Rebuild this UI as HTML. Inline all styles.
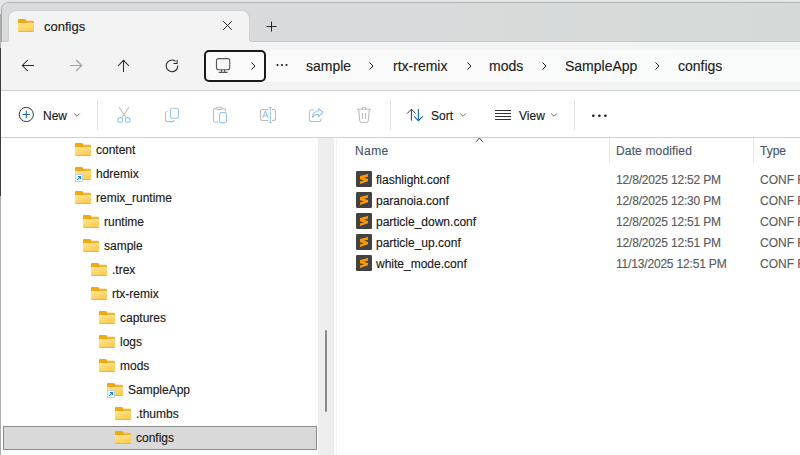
<!DOCTYPE html>
<html><head><meta charset="utf-8">
<style>
*{margin:0;padding:0;box-sizing:border-box}
html,body{width:800px;height:455px;overflow:hidden;background:#e3e4e6;font-family:"Liberation Sans",sans-serif;color:#1b1b1b}
.a{position:absolute}
svg{display:block}
.t{position:absolute;white-space:nowrap;line-height:1;-webkit-text-stroke:0.15px currentColor}
</style></head><body>
<svg width="0" height="0" style="position:absolute"><defs>
<linearGradient id="fg" x1="0" y1="0" x2="0.5" y2="1"><stop offset="0" stop-color="#fee496"/><stop offset="1" stop-color="#fbcf55"/></linearGradient>
<symbol id="fold" viewBox="0 0 16 13">
<path d="M0 1.2Q0 0 1.2 0H6.3Q6.9 0 7.3 .5L8.2 1.8H14.8Q16 1.8 16 3V11.8Q16 13 14.8 13H1.2Q0 13 0 11.8Z" fill="#f2b62c"/>
<path d="M0 1.2Q0 0 1.2 0H6.3Q6.9 0 7.3 .5L8.8 2.5V4H0Z" fill="#eeaa12"/>
<path d="M0 4.4Q0 3.9 .5 3.9H15.5Q16 3.9 16 4.4V11.3Q16 12 15.3 12H.7Q0 12 0 11.3Z" fill="url(#fg)"/>
</symbol>
<symbol id="subl" viewBox="0 0 16 16">
<rect x="0" y="0" width="16" height="16" rx="1.3" fill="#424242"/>
<path d="M4 5L12 2.9V5.8L7.9 6.85L12 7.9V10.3L4 13V10.5L8 9.35L4 8.3Z" fill="#ff9800"/>
</symbol>
<symbol id="short" viewBox="0 0 8 8">
<rect x=".5" y=".5" width="7" height="7" fill="#fff" stroke="#c5d0dc"/>
<path d="M2.2 5.8L5.3 2.7M3 2.5H5.5V5" stroke="#1c82dd" stroke-width="1.2" fill="none"/>
</symbol>
</defs></svg>

<!-- left outside column -->
<div class="a" style="left:0;top:0;width:1px;height:455px;background:#ababab"></div><div class="a" style="left:0;top:0;width:1px;height:14px;background:#e4e5e7"></div>
<div class="a" style="left:0;top:48px;width:1px;height:148px;background:#3c3c3c"></div>

<!-- window -->
<div class="a" style="left:1px;top:2px;width:820px;height:460px;background:#fff;border-top:1px solid #b4b5b7;border-left:1px solid #a8a9ab;border-top-left-radius:8px;overflow:hidden">
</div>
<!-- title bar -->
<div class="a" style="left:2px;top:3px;width:798px;height:39px;background:#d9dadb;border-top-left-radius:7px;overflow:hidden">
  <div class="a" style="left:0;top:33px;width:798px;height:6px;background:#f3f3f3"></div>
  <div class="a" style="left:-1px;top:0;width:8px;height:39px;background:#d9dadb;border-bottom-right-radius:3px;border-right:1px solid #cbcccd;border-bottom:1px solid #cbcccd"></div>
  <div class="a" style="left:247px;top:-1px;width:551px;height:40px;background:linear-gradient(90deg,#d9dadb 0%,#d9dadb 35%,#d5dad8 100%);border-bottom-left-radius:3px;border-left:1px solid #c9cacb;border-bottom:1px solid #c9cacb"></div>
  <div class="a" style="left:0;top:0;width:798px;height:12px;background:linear-gradient(90deg,#d9dadb 0%,#d9dadb 55%,#d5dad8 100%)"></div>
  <div class="a" style="left:6px;top:7px;width:242px;height:28px;background:#f3f3f3;border:1px solid #d0d1d2;border-bottom:0;border-radius:8px 8px 0 0"></div>
</div>
<!-- tab content -->
<svg class="a" style="left:18px;top:19px" width="16" height="13"><use href="#fold"/></svg>
<div class="t" style="left:44px;top:20px;font-size:13px;color:#1a1a1a">configs</div>
<svg class="a" style="left:222px;top:20px" width="11" height="11" viewBox="0 0 11 11"><path d="M1.2 1.2L9.8 9.8M9.8 1.2L1.2 9.8" stroke="#262626" stroke-width="1"/></svg>
<svg class="a" style="left:266px;top:21px" width="12" height="12" viewBox="0 0 12 12"><path d="M5.5 .6V10.6M.5 5.5H10.5" stroke="#262626" stroke-width="1"/></svg>

<!-- nav bar -->
<div class="a" style="left:1px;top:42px;width:799px;height:49px;background:linear-gradient(90deg,#f3f3f3 50%,#f1f4f2);border-bottom:1px solid #cdd0d0"></div>
<svg class="a" style="left:21px;top:59px" width="14" height="13" viewBox="0 0 14 13"><path d="M13 6.5H1.5M6.8 1L1.3 6.5L6.8 12" stroke="#2b2b2b" stroke-width="1.05" fill="none"/></svg>
<svg class="a" style="left:69px;top:59px" width="14" height="13" viewBox="0 0 14 13"><path d="M1 6.5H12.5M7.2 1L12.7 6.5L7.2 12" stroke="#a3a3a3" stroke-width="1.15" fill="none"/></svg>
<svg class="a" style="left:117px;top:59px" width="13" height="14" viewBox="0 0 13 14"><path d="M6.5 13V1.5M1 7L6.5 1.3L12 7" stroke="#2b2b2b" stroke-width="1.05" fill="none"/></svg>
<svg class="a" style="left:165px;top:59px" width="14" height="14" viewBox="0 0 14 14"><path d="M12.8 6.6A5.8 5.8 0 1 1 10.6 2.3" stroke="#2b2b2b" stroke-width="1.05" fill="none"/><path d="M12.1 .9V4.5H8.4" stroke="#2b2b2b" stroke-width="1.05" fill="none"/></svg>

<!-- address bar -->
<div class="a" style="left:204px;top:50px;width:596px;height:32px;background:linear-gradient(90deg,#fafafa 50%,#f9fbfa);border-radius:4px 0 0 4px"></div>
<div class="a" style="left:204px;top:50px;width:62px;height:32px;border:2px solid #1a1a1a;border-radius:5px"></div>
<svg class="a" style="left:215px;top:57px" width="16" height="17" viewBox="0 0 16 17"><rect x="1.5" y="1.6" width="13.2" height="11.2" rx="2" stroke="#555" stroke-width="1.1" fill="none"/><path d="M6.6 12.8V15.2M9.6 12.8V15.2M3.6 15.4H12.6" stroke="#555" stroke-width="1.1" fill="none"/></svg>
<svg class="a" style="left:249px;top:61px" width="8" height="10" viewBox="0 0 8 10"><path d="M2.5 1.5L6 5L2.5 8.5" stroke="#1f1f1f" stroke-width="1" fill="none"/></svg>
<svg class="a" style="left:275px;top:63px" width="14" height="4" viewBox="0 0 14 4"><circle cx="2.5" cy="2" r="1.1" fill="#222"/><circle cx="7" cy="2" r="1.1" fill="#222"/><circle cx="11.5" cy="2" r="1.1" fill="#222"/></svg>
<div class="t" style="left:306px;top:59px;font-size:14px;color:#1f1f1f">sample</div>
<svg class="a" style="left:367px;top:61px" width="8" height="10" viewBox="0 0 8 10"><path d="M2.5 1.5L6 5L2.5 8.5" stroke="#1f1f1f" stroke-width="1" fill="none"/></svg>
<div class="t" style="left:393px;top:59px;font-size:14px;color:#1f1f1f">rtx-remix</div>
<svg class="a" style="left:465px;top:61px" width="8" height="10" viewBox="0 0 8 10"><path d="M2.5 1.5L6 5L2.5 8.5" stroke="#1f1f1f" stroke-width="1" fill="none"/></svg>
<div class="t" style="left:489px;top:59px;font-size:14px;color:#1f1f1f">mods</div>
<svg class="a" style="left:540px;top:61px" width="8" height="10" viewBox="0 0 8 10"><path d="M2.5 1.5L6 5L2.5 8.5" stroke="#1f1f1f" stroke-width="1" fill="none"/></svg>
<div class="t" style="left:565px;top:59px;font-size:14px;color:#1f1f1f">SampleApp</div>
<svg class="a" style="left:653px;top:61px" width="8" height="10" viewBox="0 0 8 10"><path d="M2.5 1.5L6 5L2.5 8.5" stroke="#1f1f1f" stroke-width="1" fill="none"/></svg>
<div class="t" style="left:678px;top:59px;font-size:14px;color:#1f1f1f">configs</div>

<!-- command bar -->
<div class="a" style="left:1px;top:91px;width:799px;height:47px;background:#fff;border-bottom:1px solid #cfd1d1"></div>


<!-- command bar content -->
<svg class="a" style="left:18px;top:106px" width="17" height="17" viewBox="0 0 17 17"><circle cx="8.3" cy="8.5" r="7.1" stroke="#333" stroke-width="1" fill="none"/><path d="M8.3 4.8V12.2M4.6 8.5H12" stroke="#0f6cbd" stroke-width="1.1"/></svg>
<div class="t" style="left:43px;top:110px;font-size:12px;color:#1a1a1a">New</div>
<svg class="a" style="left:73px;top:112px" width="8" height="6" viewBox="0 0 8 6"><path d="M1.2 1.5L4 4.3L6.8 1.5" stroke="#707070" stroke-width="1" fill="none"/></svg>
<div class="a" style="left:97px;top:99px;width:1px;height:31px;background:#e3e3e3"></div>
<!-- cut -->
<svg class="a" style="left:115px;top:105px" width="18" height="19" viewBox="0 0 18 19"><path d="M4 2L11 12.5M14 2L7 12.5" stroke="#bdbdbd" stroke-width="1.1" fill="none"/><circle cx="5.2" cy="15" r="2.4" stroke="#99c9f0" stroke-width="1.1" fill="none"/><circle cx="12.8" cy="15" r="2.4" stroke="#99c9f0" stroke-width="1.1" fill="none"/></svg>
<!-- copy -->
<svg class="a" style="left:164px;top:107px" width="16" height="16" viewBox="0 0 16 16"><path d="M3.5 4.2Q1.5 4.5 1.5 6.5V12.5Q1.5 14.6 3.6 14.6H8.5Q10.2 14.6 10.6 13" stroke="#bdbdbd" stroke-width="1.1" fill="none"/><rect x="6.5" y="1.2" width="8" height="10" rx="2" stroke="#99c9f0" stroke-width="1.1" fill="none"/></svg>
<!-- paste -->
<svg class="a" style="left:212px;top:106px" width="16" height="18" viewBox="0 0 16 18"><path d="M4.3 2.6H3Q1.5 2.6 1.5 4.1V14.8Q1.5 16.3 3 16.3H6M10.7 2.6H12Q13.5 2.6 13.5 4.1V5" stroke="#bdbdbd" stroke-width="1.1" fill="none"/><rect x="4.5" y="1.2" width="5.8" height="2.4" rx="1.2" stroke="#bdbdbd" stroke-width="1.1" fill="none"/><rect x="7.5" y="6.6" width="7" height="10" rx="1.5" stroke="#99c9f0" stroke-width="1.1" fill="none"/></svg>
<!-- rename -->
<svg class="a" style="left:259px;top:106px" width="18" height="18" viewBox="0 0 18 18"><path d="M9.5 3.5H3.5Q1.5 3.5 1.5 5.5V12.5Q1.5 14.5 3.5 14.5H9.5M13 3.5H14.5Q16.5 3.5 16.5 5.5V12.5Q16.5 14.5 14.5 14.5H13" stroke="#bdbdbd" stroke-width="1.1" fill="none"/><path d="M3.6 12L6.4 5.2L9.2 12M4.6 9.8H8.2" stroke="#99c9f0" stroke-width="1.1" fill="none"/><path d="M11.3 1.5V16.5M9.7 1.5H12.9M9.7 16.5H12.9" stroke="#99c9f0" stroke-width="1.1" fill="none"/></svg>
<!-- share -->
<svg class="a" style="left:308px;top:107px" width="17" height="16" viewBox="0 0 17 16"><path d="M6 3H3.2Q1.5 3 1.5 4.7V12.8Q1.5 14.5 3.2 14.5H11.3Q13 14.5 13 12.8V11.5" stroke="#bdbdbd" stroke-width="1.1" fill="none"/><path d="M10.5 1.5L15 5.5L10.5 9.5V7.3Q6.5 7.1 4.4 10.5Q5 4.4 10.5 3.8Z" stroke="#99c9f0" stroke-width="1.1" fill="none" stroke-linejoin="round"/></svg>
<!-- delete -->
<svg class="a" style="left:356px;top:106px" width="16" height="18" viewBox="0 0 16 18"><path d="M1 3.3H15M6 3.3Q6 1.2 8 1.2Q10 1.2 10 3.3M2.7 3.5L3.8 15Q4 16.5 5.5 16.5H10.5Q12 16.5 12.2 15L13.3 3.5M6.5 7V13M9.5 7V13" stroke="#bdbdbd" stroke-width="1.1" fill="none"/></svg>
<div class="a" style="left:390px;top:99px;width:1px;height:31px;background:#e3e3e3"></div>
<!-- sort -->
<svg class="a" style="left:405px;top:107px" width="19" height="16" viewBox="0 0 19 16"><path d="M6.4 13.6V2.3M2.1 6.6L6.4 2.2L10.7 6.6" stroke="#3a3a3a" stroke-width="1" fill="none"/><path d="M13.4 2V13.6M9.1 9.3L13.4 13.6L17.7 9.3" stroke="#0f6cbd" stroke-width="1.1" fill="none"/></svg>
<div class="t" style="left:431px;top:110px;font-size:12px;color:#1a1a1a">Sort</div>
<svg class="a" style="left:459px;top:112px" width="8" height="6" viewBox="0 0 8 6"><path d="M1.2 1.5L4 4.3L6.8 1.5" stroke="#707070" stroke-width="1" fill="none"/></svg>
<!-- view -->
<svg class="a" style="left:494px;top:108px" width="18" height="14" viewBox="0 0 18 14"><path d="M1 2.5H17M1 5.5H17M1 8.5H17M1 11.5H17" stroke="#333" stroke-width="1" fill="none"/></svg>
<div class="t" style="left:519px;top:110px;font-size:12px;color:#1a1a1a">View</div>
<svg class="a" style="left:550px;top:112px" width="8" height="6" viewBox="0 0 8 6"><path d="M1.2 1.5L4 4.3L6.8 1.5" stroke="#707070" stroke-width="1" fill="none"/></svg>
<div class="a" style="left:574px;top:99px;width:1px;height:31px;background:#e3e3e3"></div>
<svg class="a" style="left:590px;top:113px" width="18" height="6" viewBox="0 0 18 6"><circle cx="3.3" cy="2.8" r="1.3" fill="#1a1a1a"/><circle cx="9.4" cy="2.8" r="1.3" fill="#1a1a1a"/><circle cx="15.4" cy="2.8" r="1.3" fill="#1a1a1a"/></svg>

<!-- nav pane -->
<div class="a" style="left:1px;top:138px;width:317px;height:317px;background:#fff"></div>
<div class="a" style="left:318px;top:138px;width:16px;height:317px;background:#eeeeee"></div>
<div class="a" style="left:336px;top:138px;width:1px;height:317px;background:#f3f3f3"></div>
<div class="a" style="left:325px;top:330px;width:2px;height:82px;background:#8a8a8a;border-radius:1px"></div>

<!-- tree -->
<div class="a" style="left:3px;top:426px;width:314px;height:24px;background:#d9d9d9;border:1px solid #8c8c8c"></div>
<svg class="a" style="left:75px;top:143px" width="16" height="13"><use href="#fold"/></svg>
<div class="t" style="left:96px;top:144px;font-size:12px;color:#1a1a1a">content</div>
<svg class="a" style="left:75px;top:167px" width="16" height="13"><use href="#fold"/></svg>
<svg class="a" style="left:75px;top:174px" width="8" height="8"><use href="#short"/></svg>
<div class="t" style="left:96px;top:168px;font-size:12px;color:#1a1a1a">hdremix</div>
<svg class="a" style="left:75px;top:191px" width="16" height="13"><use href="#fold"/></svg>
<div class="t" style="left:96px;top:192px;font-size:12px;color:#1a1a1a">remix_runtime</div>
<svg class="a" style="left:83px;top:215px" width="16" height="13"><use href="#fold"/></svg>
<div class="t" style="left:104px;top:216px;font-size:12px;color:#1a1a1a">runtime</div>
<svg class="a" style="left:83px;top:239px" width="16" height="13"><use href="#fold"/></svg>
<div class="t" style="left:104px;top:240px;font-size:12px;color:#1a1a1a">sample</div>
<svg class="a" style="left:91px;top:263px" width="16" height="13"><use href="#fold"/></svg>
<div class="t" style="left:112px;top:264px;font-size:12px;color:#1a1a1a">.trex</div>
<svg class="a" style="left:91px;top:287px" width="16" height="13"><use href="#fold"/></svg>
<div class="t" style="left:112px;top:288px;font-size:12px;color:#1a1a1a">rtx-remix</div>
<svg class="a" style="left:99px;top:311px" width="16" height="13"><use href="#fold"/></svg>
<div class="t" style="left:120px;top:312px;font-size:12px;color:#1a1a1a">captures</div>
<svg class="a" style="left:99px;top:335px" width="16" height="13"><use href="#fold"/></svg>
<div class="t" style="left:120px;top:336px;font-size:12px;color:#1a1a1a">logs</div>
<svg class="a" style="left:99px;top:359px" width="16" height="13"><use href="#fold"/></svg>
<div class="t" style="left:120px;top:360px;font-size:12px;color:#1a1a1a">mods</div>
<svg class="a" style="left:107px;top:383px" width="16" height="13"><use href="#fold"/></svg>
<svg class="a" style="left:107px;top:390px" width="8" height="8"><use href="#short"/></svg>
<div class="t" style="left:128px;top:384px;font-size:12px;color:#1a1a1a">SampleApp</div>
<svg class="a" style="left:115px;top:407px" width="16" height="13"><use href="#fold"/></svg>
<div class="t" style="left:136px;top:408px;font-size:12px;color:#1a1a1a">.thumbs</div>
<svg class="a" style="left:115px;top:431px" width="16" height="13"><use href="#fold"/></svg>
<div class="t" style="left:136px;top:432px;font-size:12px;color:#1a1a1a">configs</div>
<!-- files -->
<div class="t" style="left:355px;top:145px;font-size:12px;color:#4a5568;letter-spacing:.4px">Name</div>
<svg class="a" style="left:474px;top:135px" width="11" height="8" viewBox="0 0 11 8"><path d="M2.2 6.7L5.4 3L8.6 6.7" stroke="#444" stroke-width="1" fill="none"/></svg>
<div class="a" style="left:609px;top:138px;width:1px;height:25px;background:#e5e5e5"></div>
<div class="t" style="left:616px;top:145px;font-size:12px;color:#4a5568;letter-spacing:.15px">Date modified</div>
<div class="a" style="left:753px;top:138px;width:1px;height:25px;background:#e5e5e5"></div>
<div class="t" style="left:760px;top:145px;font-size:12px;color:#4a5568">Type</div>
<svg class="a" style="left:356px;top:171px" width="16" height="16"><use href="#subl"/></svg>
<div class="t" style="left:376px;top:174px;font-size:12px;color:#1a1a1a">flashlight.conf</div>
<div class="t" style="left:616px;top:174px;font-size:12px;color:#5c5c5c;letter-spacing:-.18px">12/8/2025 12:52 PM</div>
<div class="t" style="left:760px;top:174px;font-size:12px;color:#5c5c5c">CONF File</div>
<svg class="a" style="left:356px;top:192px" width="16" height="16"><use href="#subl"/></svg>
<div class="t" style="left:376px;top:195px;font-size:12px;color:#1a1a1a">paranoia.conf</div>
<div class="t" style="left:616px;top:195px;font-size:12px;color:#5c5c5c;letter-spacing:-.18px">12/8/2025 12:30 PM</div>
<div class="t" style="left:760px;top:195px;font-size:12px;color:#5c5c5c">CONF File</div>
<svg class="a" style="left:356px;top:213px" width="16" height="16"><use href="#subl"/></svg>
<div class="t" style="left:376px;top:216px;font-size:12px;color:#1a1a1a">particle_down.conf</div>
<div class="t" style="left:616px;top:216px;font-size:12px;color:#5c5c5c;letter-spacing:-.18px">12/8/2025 12:51 PM</div>
<div class="t" style="left:760px;top:216px;font-size:12px;color:#5c5c5c">CONF File</div>
<svg class="a" style="left:356px;top:234px" width="16" height="16"><use href="#subl"/></svg>
<div class="t" style="left:376px;top:237px;font-size:12px;color:#1a1a1a">particle_up.conf</div>
<div class="t" style="left:616px;top:237px;font-size:12px;color:#5c5c5c;letter-spacing:-.18px">12/8/2025 12:51 PM</div>
<div class="t" style="left:760px;top:237px;font-size:12px;color:#5c5c5c">CONF File</div>
<svg class="a" style="left:356px;top:255px" width="16" height="16"><use href="#subl"/></svg>
<div class="t" style="left:376px;top:258px;font-size:12px;color:#1a1a1a">white_mode.conf</div>
<div class="t" style="left:616px;top:258px;font-size:12px;color:#5c5c5c;letter-spacing:-.18px">11/13/2025 12:51 PM</div>
<div class="t" style="left:760px;top:258px;font-size:12px;color:#5c5c5c">CONF File</div>
</body></html>
